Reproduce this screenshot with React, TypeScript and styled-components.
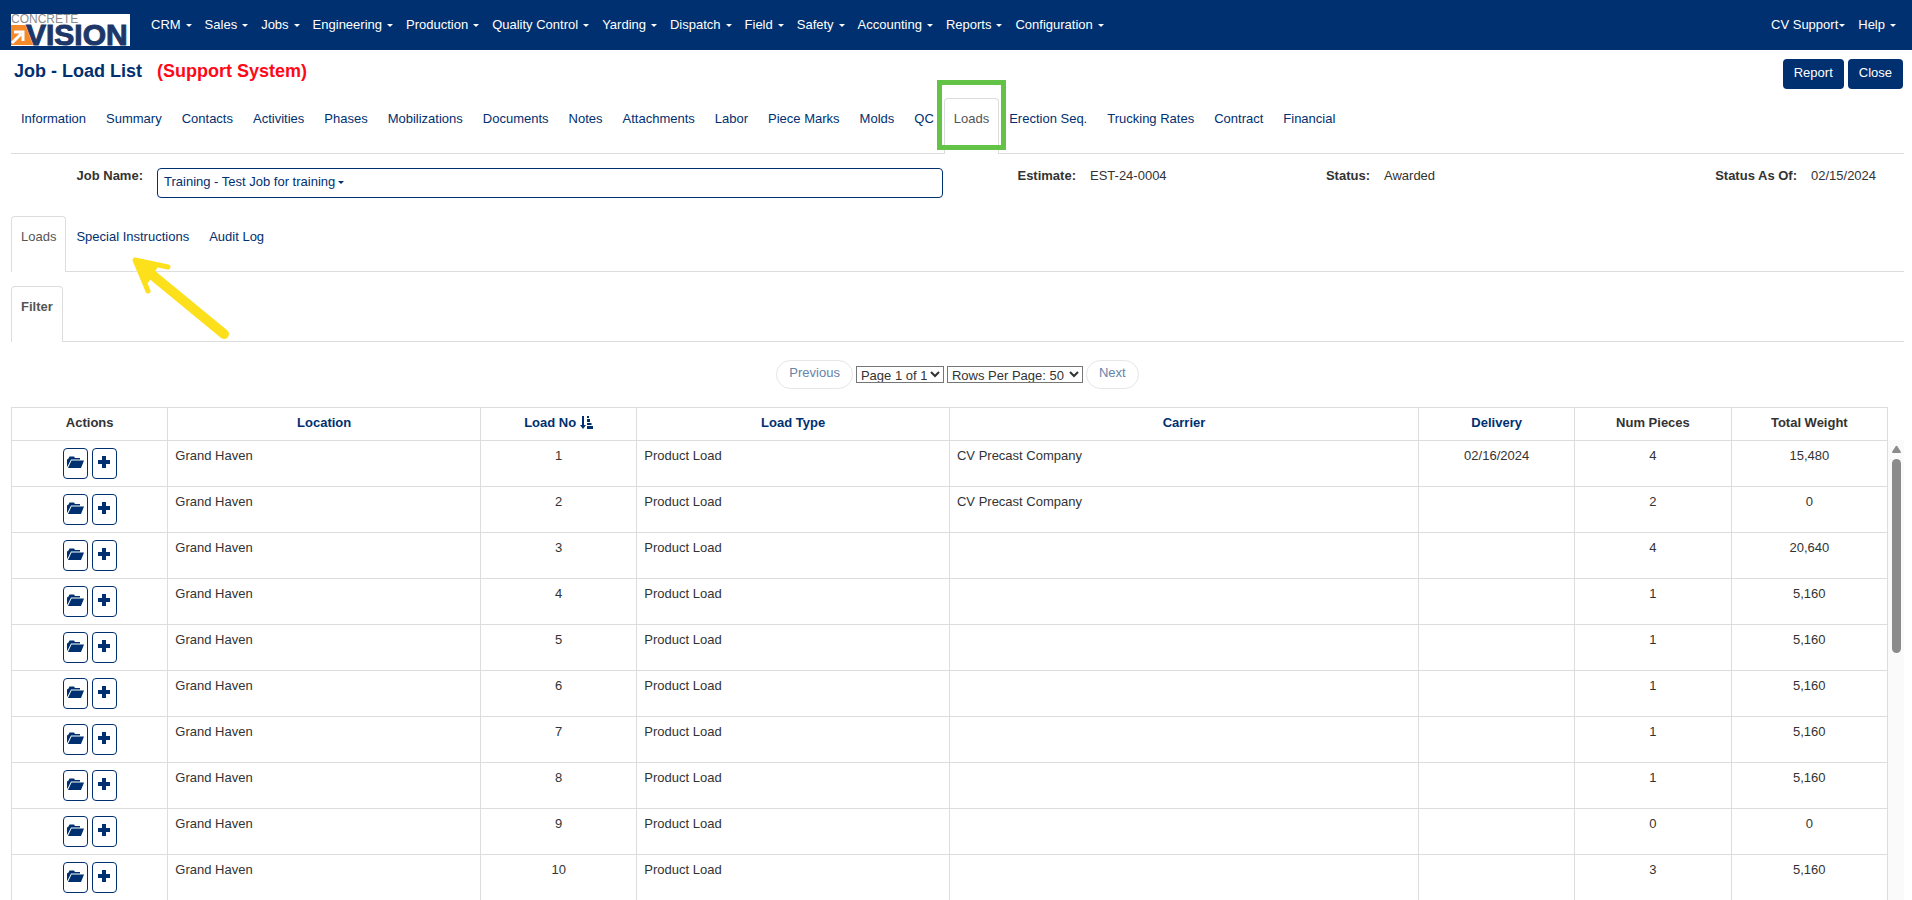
import React from "react";
import styled, { createGlobalStyle } from "styled-components";

const navy = "#003070";
const line = "#dddddd";

const GlobalStyle = createGlobalStyle`
  * { box-sizing: border-box; }
  body {
    margin: 0;
    background: #fff;
    color: #333;
    font: 13px/18px "Liberation Sans", Arial, sans-serif;
  }
  a { color: inherit; text-decoration: none; }
  button, select { font: inherit; }
`;

const Page = styled.div`
  position: relative;
  display: flex;
  flex-direction: column;
  height: 100vh;
  overflow: hidden;
`;

const NavBar = styled.header`
  display: flex;
  flex: none;
  align-items: center;
  height: 50px;
  padding: 0 16px 0 11px;
  background: ${navy};
  color: #fff;
`;

const LogoLink = styled.a`
  display: flex;
  margin: 10px 21px 0 0;
`;

const LogoMark = styled.svg`
  display: block;
  overflow: visible;
`;

const Menu = styled.nav`
  display: flex;
  flex: 1;
  gap: 13px;
`;

const MenuButton = styled.button<{ $tight?: boolean }>`
  display: flex;
  align-items: center;
  gap: ${(p) => (p.$tight ? 1 : 5)}px;
  padding: 0;
  border: 0;
  background: none;
  color: inherit;
  white-space: nowrap;
`;

const UserMenu = styled.nav`
  display: flex;
  gap: 13px;
`;

const Caret = styled.span`
  border: 3px solid transparent;
  border-top-color: currentColor;
  border-bottom: 0;
`;

const TitleBar = styled.div`
  display: flex;
  flex: none;
  justify-content: space-between;
  align-items: flex-start;
  height: 48px;
  padding: 9px 9px 0 14px;
`;

const Title = styled.h1`
  display: flex;
  gap: 15px;
  margin: 0;
  color: ${navy};
  font-size: 18px;
  line-height: 24px;
`;

const SystemName = styled.span`
  color: #ff0818;
`;

const TitleActions = styled.div`
  display: flex;
  gap: 4px;
`;

const PrimaryButton = styled.button`
  height: 30px;
  padding: 0 11px 3px;
  border: 0;
  border-radius: 4px;
  background: ${navy};
  color: #fff;
`;

const TabStrip = styled.nav`
  display: flex;
  flex: none;
  height: 56px;
  margin: 0 8px 0 11px;
  border-bottom: 1px solid ${line};
`;

const Tab = styled.a<{ $active?: boolean; $bold?: boolean }>`
  height: 56px;
  padding: 11px 9px 0;
  border: 1px solid ${(p) => (p.$active ? line : "transparent")};
  border-bottom: 0;
  border-radius: 4px 4px 0 0;
  background: ${(p) => (p.$active ? "#fff" : "none")};
  color: ${(p) => (p.$active ? "#555" : navy)};
  font-weight: ${(p) => (p.$bold ? 700 : 400)};
  white-space: nowrap;
`;

const Highlighted = styled.div`
  position: relative;
  display: flex;
`;

const HighlightBox = styled.div`
  position: absolute;
  inset: -18px -7px 3px;
  border: 5px solid #62c346;
`;

const JobSummary = styled.section`
  display: grid;
  grid-template-columns: 150fr 800fr 133fr 180fr 114fr 240fr 187fr 108fr;
  flex: none;
  padding: 14px 0 18px;
`;

const FieldLabel = styled.span`
  padding: 0 7px;
  font-weight: 700;
  line-height: 16px;
  text-align: right;
  white-space: nowrap;
`;

const FieldValue = styled.div`
  padding: 0 7px;
  line-height: 16px;
  white-space: nowrap;
`;

const JobPicker = styled.button`
  display: flex;
  align-items: center;
  gap: 3px;
  width: 100%;
  height: 30px;
  padding: 0 6px 2px;
  border: 1px solid ${navy};
  border-radius: 4px;
  background: #fff;
  color: ${navy};
`;

const Stack = styled.div`
  display: flex;
  flex: none;
  flex-direction: column;
  gap: 14px;
`;

const Pager = styled.div`
  display: flex;
  flex: none;
  justify-content: center;
  align-items: center;
  gap: 3px;
  padding: 18px 8px 18px 11px;
`;

const PagerButton = styled.button`
  height: 29px;
  padding: 0 12px 4px;
  border: 1px solid #e6e6e6;
  border-radius: 15px;
  background: #fff;
  color: #6683a9;
`;

const PagerSelect = styled.select<{ $width: number }>`
  width: ${(p) => p.$width}px;
  height: 17px;
  padding: 0;
  border: 1px solid #767676;
  border-radius: 0;
  background: #fff;
  color: #333;
`;

const ListArea = styled.div`
  display: flex;
  flex: 1;
  min-height: 0;
  overflow: hidden;
  padding: 0 8px 0 11px;
`;

const Table = styled.table`
  flex: 1;
  height: max-content;
  table-layout: fixed;
  border-collapse: collapse;
`;

const HeaderCell = styled.th<{ $plain?: boolean }>`
  height: 33px;
  padding: 0 7px 2px;
  border: 1px solid ${line};
  color: ${(p) => (p.$plain ? "#333" : navy)};
`;

const SortIcon = styled.svg`
  margin-left: 4px;
  vertical-align: -2px;
`;

const Cell = styled.td<{ $center?: boolean }>`
  height: 46px;
  padding: 6px 7px;
  border: 1px solid ${line};
  text-align: ${(p) => (p.$center ? "center" : "left")};
  vertical-align: top;
`;

const RowActions = styled.div`
  display: flex;
  justify-content: center;
  gap: 4px;
  padding-top: 1px;
`;

const IconButton = styled.button`
  display: flex;
  justify-content: center;
  width: 25px;
  height: 31px;
  padding: 7px 0 0;
  border: 1px solid ${navy};
  border-radius: 4px;
  background: #fff;
  color: ${navy};
`;

const ScrollTrack = styled.div`
  flex: none;
  width: 16px;
  margin-top: 33px;
  padding: 5px 3px 0 4px;
  background: #fafafa;
`;

const ScrollThumb = styled.div`
  width: 9px;
  height: 194px;
  margin-top: 6px;
  border-radius: 5px;
  background: #8b8b8b;
`;

const ScrollArrow = styled.svg`
  display: block;
`;

const PointerArrow = styled.svg`
  position: absolute;
  left: 128px;
  top: 252px;
`;

const menus = ["CRM", "Sales", "Jobs", "Engineering", "Production", "Quality Control", "Yarding", "Dispatch", "Field", "Safety", "Accounting", "Reports", "Configuration"];

const jobTabs = ["Information", "Summary", "Contacts", "Activities", "Phases", "Mobilizations", "Documents", "Notes", "Attachments", "Labor", "Piece Marks", "Molds", "QC", "Loads", "Erection Seq.", "Trucking Rates", "Contract", "Financial"];

const columns = [
  { name: "Actions", span: 1, plain: true },
  { name: "Location", span: 2 },
  { name: "Load No", span: 1, sorted: true },
  { name: "Load Type", span: 2 },
  { name: "Carrier", span: 3 },
  { name: "Delivery", span: 1 },
  { name: "Num Pieces", span: 1, plain: true },
  { name: "Total Weight", span: 1, plain: true },
];

const loads = [
  { no: 1, carrier: "CV Precast Company", delivery: "02/16/2024", pieces: 4, weight: "15,480" },
  { no: 2, carrier: "CV Precast Company", delivery: "", pieces: 2, weight: "0" },
  { no: 3, carrier: "", delivery: "", pieces: 4, weight: "20,640" },
  { no: 4, carrier: "", delivery: "", pieces: 1, weight: "5,160" },
  { no: 5, carrier: "", delivery: "", pieces: 1, weight: "5,160" },
  { no: 6, carrier: "", delivery: "", pieces: 1, weight: "5,160" },
  { no: 7, carrier: "", delivery: "", pieces: 1, weight: "5,160" },
  { no: 8, carrier: "", delivery: "", pieces: 1, weight: "5,160" },
  { no: 9, carrier: "", delivery: "", pieces: 0, weight: "0" },
  { no: 10, carrier: "", delivery: "", pieces: 3, weight: "5,160" },
];

const Logo = () => (
  <LogoMark width="119" height="32" viewBox="0 0 119 32" role="img" aria-label="Concrete Vision">
    <rect width="119" height="32" fill="#fff" />
    <path d="M0 11H24V31H0Z" fill="#f58a2b" />
    <path d="M14 10H30L26 31H22Z" fill="#fff" />
    <path d="M1 29L10 20M3 18H12V27" fill="none" stroke="#fff" strokeWidth="3" />
    <text x="15" y="31" fill="#1d3768" stroke="#1d3768" strokeWidth="1" fontFamily="Liberation Sans, Arial, sans-serif" fontSize="30" fontWeight="700">VISION</text>
    <text x="0" y="9" fill="#8c8c8c" fontFamily="Liberation Sans, Arial, sans-serif" fontSize="12">CONCRETE</text>
  </LogoMark>
);

const FolderIcon = () => (
  <svg width="17" height="13" viewBox="0 0 17 13" fill="currentColor" aria-hidden="true">
    <path d="M0 11V3.500L1.500 2.500L2.500 0.500H7L8 2H13V3.500H4L1 9.500Z" />
    <path d="M4.500 4.500H17L14 12H1Z" />
  </svg>
);

const PlusIcon = () => (
  <svg width="12" height="12" viewBox="0 0 12 12" fill="currentColor" aria-hidden="true">
    <path d="M4 0h4v4h4v4H8v4H4V8H0V4h4z" />
  </svg>
);

const App = () => (
  <>
    <GlobalStyle />
    <Page>
      <NavBar>
        <LogoLink href="#home"><Logo /></LogoLink>
        <Menu>
          {menus.map((m) => (
            <MenuButton key={m}>{m}<Caret /></MenuButton>
          ))}
        </Menu>
        <UserMenu>
          <MenuButton $tight>CV Support<Caret /></MenuButton>
          <MenuButton>Help<Caret /></MenuButton>
        </UserMenu>
      </NavBar>

      <TitleBar>
        <Title>Job - Load List<SystemName>(Support System)</SystemName></Title>
        <TitleActions>
          <PrimaryButton>Report</PrimaryButton>
          <PrimaryButton>Close</PrimaryButton>
        </TitleActions>
      </TitleBar>

      <TabStrip>
        {jobTabs.map((t) =>
          t === "Loads" ? (
            <Highlighted key={t}>
              <Tab href="#loads" $active>{t}</Tab>
              <HighlightBox />
            </Highlighted>
          ) : (
            <Tab key={t} href={"#" + t.toLowerCase()}>{t}</Tab>
          )
        )}
      </TabStrip>

      <JobSummary>
        <FieldLabel id="job-name">Job Name:</FieldLabel>
        <FieldValue>
          <JobPicker aria-describedby="job-name">Training - Test Job for training<Caret /></JobPicker>
        </FieldValue>
        <FieldLabel>Estimate:</FieldLabel>
        <FieldValue>EST-24-0004</FieldValue>
        <FieldLabel>Status:</FieldLabel>
        <FieldValue>Awarded</FieldValue>
        <FieldLabel>Status As Of:</FieldLabel>
        <FieldValue>02/15/2024</FieldValue>
      </JobSummary>

      <Stack>
        <TabStrip>
          <Tab href="#load-list" $active>Loads</Tab>
          <Tab href="#special-instructions">Special Instructions</Tab>
          <Tab href="#audit-log">Audit Log</Tab>
        </TabStrip>
        <TabStrip>
          <Tab href="#filter" $active $bold>Filter</Tab>
        </TabStrip>
      </Stack>

      <Pager>
        <PagerButton>Previous</PagerButton>
        <PagerSelect $width={88} aria-label="Page"><option>Page 1 of 1</option></PagerSelect>
        <PagerSelect $width={136} aria-label="Rows per page"><option>Rows Per Page: 50</option></PagerSelect>
        <PagerButton>Next</PagerButton>
      </Pager>

      <ListArea>
        <Table>
          <colgroup>
            {columns.map((c) => (
              <col key={c.name} style={{ width: `${(c.span / 12) * 100}%` }} />
            ))}
          </colgroup>
          <thead>
            <tr>
              {columns.map((c) => (
                <HeaderCell key={c.name} $plain={c.plain}>
                  {c.plain ? c.name : <a href="#sort">{c.name}</a>}
                  {c.sorted && (
                    <SortIcon width="13" height="13" viewBox="0 0 13 13" fill="currentColor" aria-hidden="true">
                      <path d="M2 0h2v9h2L3 13L0 9h2zM7 0h2v2H7zM7 3h3v3H7zM7 7h4.500v2H7zM7 10h6v3H7z" />
                    </SortIcon>
                  )}
                </HeaderCell>
              ))}
            </tr>
          </thead>
          <tbody>
            {loads.map((l) => (
              <tr key={l.no}>
                <Cell>
                  <RowActions>
                    <IconButton aria-label={`Open load ${l.no}`}><FolderIcon /></IconButton>
                    <IconButton aria-label={`Add to load ${l.no}`}><PlusIcon /></IconButton>
                  </RowActions>
                </Cell>
                <Cell>Grand Haven</Cell>
                <Cell $center>{l.no}</Cell>
                <Cell>Product Load</Cell>
                <Cell>{l.carrier}</Cell>
                <Cell $center>{l.delivery}</Cell>
                <Cell $center>{l.pieces}</Cell>
                <Cell $center>{l.weight}</Cell>
              </tr>
            ))}
          </tbody>
        </Table>
        <ScrollTrack>
          <ScrollArrow width="9" height="8" viewBox="0 0 9 8" fill="#8b8b8b" aria-hidden="true">
            <path d="M3.500 1.500Q4.500 0 5.500 1.500L9 7Q9 8 8 8H1Q0 8 0 7Z" />
          </ScrollArrow>
          <ScrollThumb />
        </ScrollTrack>
      </ListArea>

      <PointerArrow width="108" height="92" viewBox="0 0 108 92" fill="none" stroke="#fce01b" strokeLinecap="round" strokeLinejoin="round" aria-hidden="true">
        <path d="M17 17L96 82" strokeWidth="10" />
        <path d="M40 15L7 8L20 39" strokeWidth="5" />
        <path d="M7 8L28 14L19 29Z" fill="#fce01b" strokeWidth="4" />
      </PointerArrow>
    </Page>
  </>
);

export default App;
